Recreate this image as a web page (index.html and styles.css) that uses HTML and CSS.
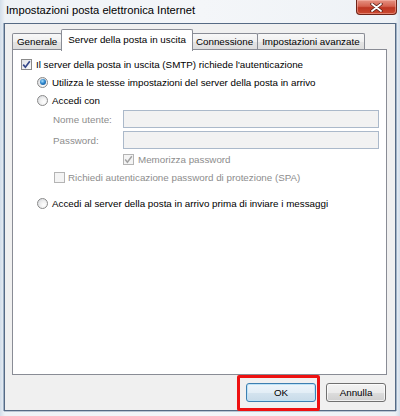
FILE: index.html
```html
<!DOCTYPE html>
<html lang="it">
<head>
<meta charset="utf-8">
<title>Impostazioni posta elettronica Internet</title>
<link rel="stylesheet" href="styles.css">
</head>
<body>
<div class="window">
  <div class="titlebar">
    <span class="title">Impostazioni posta elettronica Internet</span>
    <span class="close">
      <svg width="13" height="9" viewBox="0 0 13 9">
        <path d="M2 1 L11 8 M11 1 L2 8" stroke="#5a2018" stroke-width="3.4" stroke-linecap="round" fill="none"/>
        <path d="M2 1 L11 8 M11 1 L2 8" stroke="#ffffff" stroke-width="1.8" stroke-linecap="round" fill="none"/>
      </svg>
    </span>
  </div>
  <div class="frame">
    <div class="client">
      <div class="tabs">
        <div class="tab">Generale</div>
        <div class="tab selected">Server della posta in uscita</div>
        <div class="tab">Connessione</div>
        <div class="tab">Impostazioni avanzate</div>
      </div>
      <div class="panel">
        <div class="row row-auth">
          <span class="check checked"><svg width="9" height="9" viewBox="0 0 9 9"><path d="M1.2 4.6 L3.4 7.2 L7.8 1.2" stroke="#34488a" stroke-width="1.7" fill="none"/></svg></span>
          <span>Il server della posta in uscita (SMTP) richiede l'autenticazione</span>
        </div>
        <div class="row row-radio">
          <span class="radio on"></span>
          <span>Utilizza le stesse impostazioni del server della posta in arrivo</span>
        </div>
        <div class="row row-radio">
          <span class="radio"></span>
          <span>Accedi con</span>
        </div>
        <div class="field field-first">
          <span class="label">Nome utente:</span>
          <span class="input"></span>
        </div>
        <div class="field">
          <span class="label">Password:</span>
          <span class="input"></span>
        </div>
        <div class="row row-remember">
          <span class="check disabled"><svg width="9" height="9" viewBox="0 0 9 9"><path d="M1.2 4.6 L3.4 7.2 L7.8 1.2" stroke="#a3a3a3" stroke-width="1.5" fill="none"/></svg></span>
          <span class="muted">Memorizza password</span>
        </div>
        <div class="row row-spa">
          <span class="check disabled"></span>
          <span class="muted">Richiedi autenticazione password di protezione (SPA)</span>
        </div>
        <div class="row row-radio row-last">
          <span class="radio"></span>
          <span>Accedi al server della posta in arrivo prima di inviare i messaggi</span>
        </div>
      </div>
      <div class="buttons">
        <button class="btn btn-ok">OK</button>
        <button class="btn btn-cancel">Annulla</button>
      </div>
    </div>
  </div>
  <div class="highlight"></div>
</div>
</body>
</html>
```
FILE: styles.css
```css
html, body {
  margin: 0;
  padding: 0;
  background: #ffffff;
}

body {
  font-family: "Liberation Sans", Arial, sans-serif;
  font-size: 9.8px;
  color: #000;
}

.window {
  position: relative;
  width: 400px;
  height: 416px;
  display: flex;
  flex-direction: column;
  background: linear-gradient(90deg, #d3deea 0, #eef2f6 5px, #f4f6f9 50%, #eef2f6 395px, #d3deea 400px);
}

.titlebar {
  height: 23px;
  display: flex;
  justify-content: space-between;
  align-items: flex-start;
  padding: 0 3px 0 6px;
}

.title {
  font-size: 11.2px;
  line-height: 13px;
  padding-top: 4px;
  color: #000;
}

.close {
  width: 39px;
  height: 14px;
  border: 1px solid #6e2418;
  border-top: none;
  border-radius: 0 0 4px 4px;
  background: linear-gradient(#e59283 0%, #d5624f 45%, #bd3623 55%, #cc4a30 100%);
  display: flex;
  align-items: center;
  justify-content: center;
  box-shadow: inset 0 0 0 1px rgba(255, 200, 190, 0.45);
}

.frame {
  flex: 1;
  padding: 0 4px 5px 4px;
  display: flex;
}

.client {
  flex: 1;
  background: #f0f0f0;
  border: 1px solid #566a84;
  box-shadow: -1px 0 0 #9fb2c6, 0 1px 0 #b9c6d4, 1px 0 0 #9fb2c6;
  display: flex;
  flex-direction: column;
  padding: 5px 0 0 7px;
}

.tabs {
  display: flex;
  align-items: flex-end;
  height: 21px;
  padding-left: 1px;
}

.tab {
  height: 16px;
  line-height: 16px;
  padding: 0 4px;
  border: 1px solid #898c95;
  border-bottom: none;
  border-radius: 2px 2px 0 0;
  background: linear-gradient(#f8f8f8 0%, #efefef 50%, #e4e4e4 51%, #dcdcdc 100%);
  margin-left: -1px;
  white-space: nowrap;
}

.tab.selected {
  position: relative;
  z-index: 1;
  height: 21px;
  line-height: 19px;
  padding: 0 6px;
  margin: 0 -1px -1px -1px;
  background: #ffffff;
}

.panel {
  width: 373px;
  height: 318px;
  background: #ffffff;
  border: 1px solid #898c95;
  margin-top: -1px;
  padding: 6px 0 0 0;
  display: flex;
  flex-direction: column;
}

.row {
  display: flex;
  align-items: center;
  height: 18px;
  white-space: nowrap;
}

.row-auth {
  height: 17px;
  padding-left: 8px;
  gap: 4px;
}

.row-radio {
  padding-left: 24px;
  gap: 4px;
}

.row-remember {
  margin-top: 2px;
  height: 17px;
  padding-left: 110px;
  gap: 4px;
}

.row-spa {
  padding-left: 41px;
  gap: 3px;
}

.row-last {
  margin-top: 8px;
}

.field {
  display: flex;
  align-items: center;
  margin-top: 3px;
  padding-left: 40px;
}

.field-first {
  margin-top: 1px;
}

.label {
  width: 70px;
  color: #8d8d8d;
}

.input {
  width: 254px;
  height: 16px;
  border: 1px solid #abb9ca;
  background: #f2f2f2;
}

.muted {
  color: #8d8d8d;
}

.check {
  width: 9px;
  height: 9px;
  border: 1px solid #8a8a8a;
  background: linear-gradient(135deg, #dfe2e6, #fbfbfb);
  display: flex;
  align-items: center;
  justify-content: center;
  flex: none;
}

.check.disabled {
  border-color: #b4b4b4;
  background: #f4f4f4;
}

.radio {
  width: 9px;
  height: 9px;
  border: 1px solid #8a8a8a;
  border-radius: 50%;
  background: radial-gradient(circle at 65% 65%, #ffffff 0, #f1f1f1 40%, #cfd3d8 100%);
  flex: none;
  display: flex;
  align-items: center;
  justify-content: center;
}

.radio.on::after {
  content: "";
  width: 6px;
  height: 6px;
  border-radius: 50%;
  background: radial-gradient(circle at 40% 35%, #a6e0ff 0, #2f86cc 45%, #0f4580 100%);
}

.buttons {
  display: flex;
  justify-content: flex-end;
  gap: 10px;
  padding: 8px 9px 0 0;
}

.btn {
  font-family: "Liberation Sans", Arial, sans-serif;
  font-size: 9.8px;
  color: #000;
  height: 19px;
  padding: 0;
  border: 1px solid #707070;
  border-radius: 3px;
  background: linear-gradient(#f3f3f3 0%, #ebebeb 50%, #dddddd 51%, #cfcfcf 100%);
  box-shadow: inset 0 0 0 1px rgba(255, 255, 255, 0.7);
}

.btn-ok {
  width: 70px;
  border-color: #3c7fb1;
  background: linear-gradient(#eef6fb 0%, #e3eef6 50%, #d4e4ef 51%, #c8dbe9 100%);
  box-shadow: inset 0 0 0 1px #bfe3f7;
}

.btn-cancel {
  width: 60px;
}

.highlight {
  position: absolute;
  left: 237px;
  top: 375px;
  width: 77px;
  height: 30px;
  border: 3px solid #ee1111;
  border-radius: 2px;
}
```
